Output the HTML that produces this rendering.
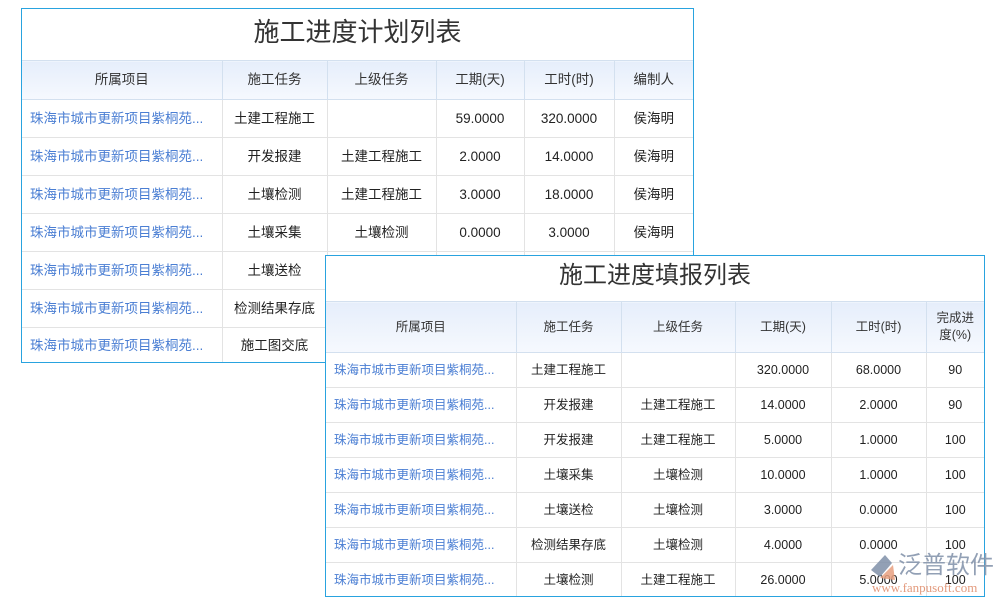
<!DOCTYPE html>
<html><head><meta charset="utf-8"><style>
body{margin:0;width:1000px;height:600px;background:#fff;position:relative;overflow:hidden;font-family:"Liberation Sans","Noto Sans CJK SC",sans-serif;}
.box{position:absolute;border:1px solid #29a3df;background:#fff;box-sizing:border-box;overflow:hidden;}
.title{text-align:center;color:#333;}
table{border-collapse:collapse;table-layout:fixed;width:100%;}
td,th{border:1px solid #e3e3e3;text-align:center;font-size:13.5px;color:#222;padding:0;white-space:nowrap;overflow:hidden;line-height:16px;}
.b2 td,.b2 th{font-size:12.5px;}
th{font-weight:normal;color:#333;background:linear-gradient(#e6eefb,#f6f9fe);border-color:#d3e0ef;}
td.l{color:#4a7ed3;text-align:left;padding-left:8px;}
tr td:first-child,tr th:first-child{border-left:none}
tr td:last-child,tr th:last-child{border-right:none}
</style></head><body>
<div class="box" style="left:21px;top:8px;width:673px;height:355px;">
<div class="title" style="height:51px;line-height:46px;font-size:26px;">施工进度计划列表</div>
<table>
<colgroup><col style="width:200px"><col style="width:105px"><col style="width:109px"><col style="width:88px"><col style="width:90px"><col></colgroup>
<tr style="height:39px"><th>所属项目</th><th>施工任务</th><th>上级任务</th><th>工期(天)</th><th>工时(时)</th><th>编制人</th></tr>
<tr style="height:38px"><td class="l">珠海市城市更新项目紫桐苑...</td><td>土建工程施工</td><td></td><td>59.0000</td><td>320.0000</td><td>侯海明</td></tr>
<tr style="height:38px"><td class="l">珠海市城市更新项目紫桐苑...</td><td>开发报建</td><td>土建工程施工</td><td>2.0000</td><td>14.0000</td><td>侯海明</td></tr>
<tr style="height:38px"><td class="l">珠海市城市更新项目紫桐苑...</td><td>土壤检测</td><td>土建工程施工</td><td>3.0000</td><td>18.0000</td><td>侯海明</td></tr>
<tr style="height:38px"><td class="l">珠海市城市更新项目紫桐苑...</td><td>土壤采集</td><td>土壤检测</td><td>0.0000</td><td>3.0000</td><td>侯海明</td></tr>
<tr style="height:38px"><td class="l">珠海市城市更新项目紫桐苑...</td><td>土壤送检</td><td></td><td></td><td></td><td></td></tr>
<tr style="height:38px"><td class="l">珠海市城市更新项目紫桐苑...</td><td>检测结果存底</td><td></td><td></td><td></td><td></td></tr>
<tr style="height:36px"><td class="l">珠海市城市更新项目紫桐苑...</td><td>施工图交底</td><td></td><td></td><td></td><td></td></tr>
</table></div>
<div class="box b2" style="left:325px;top:255px;width:660px;height:342px;">
<div class="title" style="height:45px;line-height:40px;font-size:24px;">施工进度填报列表</div>
<table>
<colgroup><col style="width:190px"><col style="width:105px"><col style="width:114px"><col style="width:96px"><col style="width:95px"><col></colgroup>
<tr style="height:51px"><th>所属项目</th><th>施工任务</th><th>上级任务</th><th>工期(天)</th><th>工时(时)</th><th style="white-space:normal;line-height:17px">完成进<br>度(%)</th></tr>
<tr style="height:35px"><td class="l">珠海市城市更新项目紫桐苑...</td><td>土建工程施工</td><td></td><td>320.0000</td><td>68.0000</td><td>90</td></tr>
<tr style="height:35px"><td class="l">珠海市城市更新项目紫桐苑...</td><td>开发报建</td><td>土建工程施工</td><td>14.0000</td><td>2.0000</td><td>90</td></tr>
<tr style="height:35px"><td class="l">珠海市城市更新项目紫桐苑...</td><td>开发报建</td><td>土建工程施工</td><td>5.0000</td><td>1.0000</td><td>100</td></tr>
<tr style="height:35px"><td class="l">珠海市城市更新项目紫桐苑...</td><td>土壤采集</td><td>土壤检测</td><td>10.0000</td><td>1.0000</td><td>100</td></tr>
<tr style="height:35px"><td class="l">珠海市城市更新项目紫桐苑...</td><td>土壤送检</td><td>土壤检测</td><td>3.0000</td><td>0.0000</td><td>100</td></tr>
<tr style="height:35px"><td class="l">珠海市城市更新项目紫桐苑...</td><td>检测结果存底</td><td>土壤检测</td><td>4.0000</td><td>0.0000</td><td>100</td></tr>
<tr style="height:34px"><td class="l">珠海市城市更新项目紫桐苑...</td><td>土壤检测</td><td>土建工程施工</td><td>26.0000</td><td>5.0000</td><td>100</td></tr>
</table></div>
<div style="position:absolute;left:868px;top:552px;width:32px;height:36px;">
<svg width="32" height="36"><path d="M3 18 L17 3 L24 11 L12 25Z" fill="#7f8fa8" opacity=".85"/><path d="M12 26 L25 13 L27 28 Z" fill="#e8a080" opacity=".85"/></svg></div>
<div style="position:absolute;left:898px;top:552px;font-size:24px;line-height:28px;color:#8796ad;opacity:.9;white-space:nowrap;">泛普软件</div>
<div style="position:absolute;left:872px;top:580px;font-size:13px;color:#e09070;font-family:'Liberation Serif',serif;opacity:.9;white-space:nowrap;">www.fanpusoft.com</div>
</body></html>
